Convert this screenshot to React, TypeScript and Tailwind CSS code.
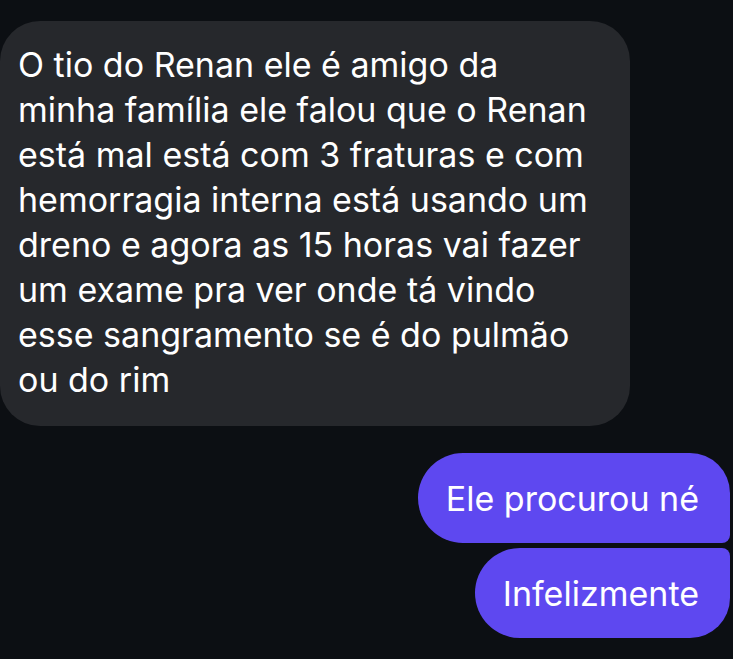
export default function App() {
  const lines = [
    "O tio do Renan ele é amigo da",
    "minha família ele falou que o Renan",
    "está mal está com 3 fraturas e com",
    "hemorragia interna está usando um",
    "dreno e agora as 15 horas vai fazer",
    "um exame pra ver onde tá vindo",
    "esse sangramento se é do pulmão",
    "ou do rim",
  ];
  return (
    <div
      className="w-[733px] h-[659px] bg-[#0c0f13] flex flex-col overflow-hidden"
      style={{ fontFamily: 'Inter, "Noto Sans", sans-serif' }}
    >
      <div className="mt-[21px] w-[630px] bg-[#26282c] rounded-[40px] pl-[18px] pt-[21px] pb-[24px] text-white text-[34px] leading-[45px]">
        {lines.map((l, i) => (
          <div key={i} className="whitespace-nowrap">
            {l}
          </div>
        ))}
      </div>
      <div className="mt-[27px] self-end mr-[3px] h-[90px] pl-[28px] pr-[31px] bg-[#5e48f0] rounded-l-[45px] rounded-tr-[40px] rounded-br-[8px] flex items-center text-white text-[34px]">
        Ele procurou né
      </div>
      <div className="mt-[5px] self-end mr-[3px] h-[90px] pl-[28px] pr-[31px] bg-[#5e48f0] rounded-l-[45px] rounded-tr-[8px] rounded-br-[40px] flex items-center text-white text-[34px]">
        Infelizmente
      </div>
    </div>
  );
}
